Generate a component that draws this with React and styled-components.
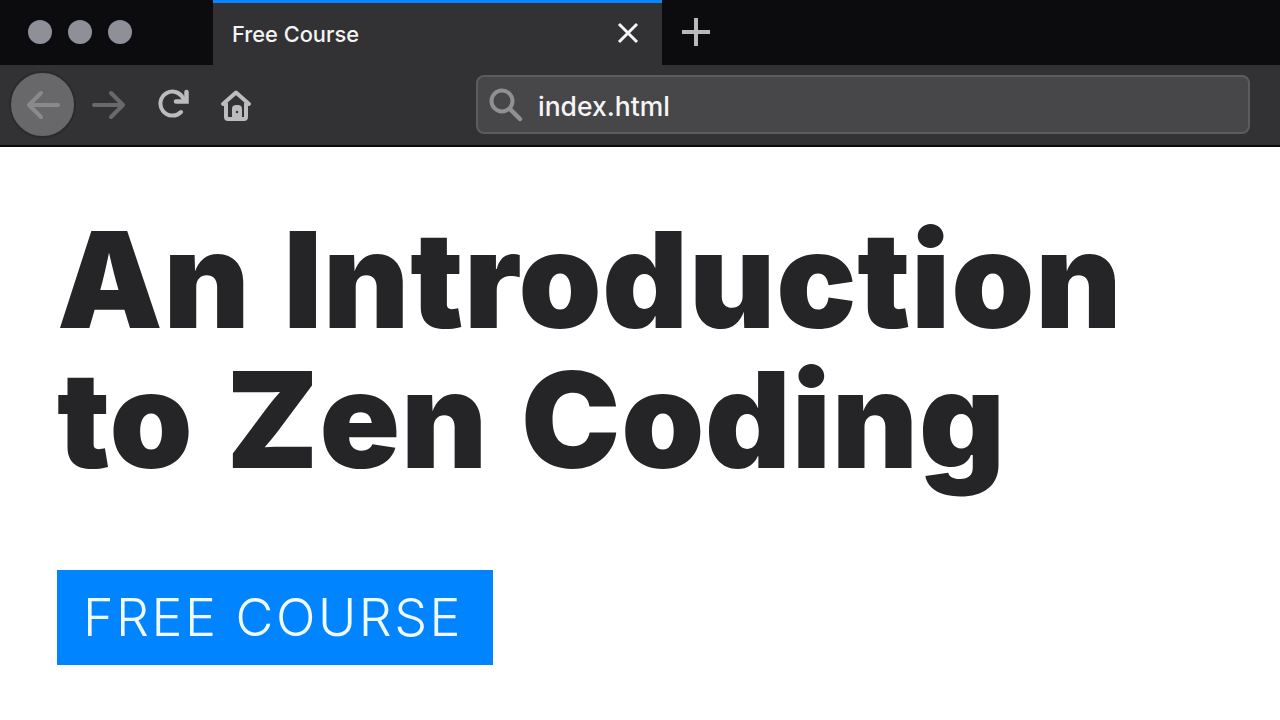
import React from "react";
import styled, { createGlobalStyle } from "styled-components";

const Global = createGlobalStyle`
  html, body { margin: 0; padding: 0; background: #fff; }
  body { width: 1280px; height: 720px; overflow: hidden; font-family: "Inter", "Liberation Sans", sans-serif; }
`;
const Page = styled.div`width:1280px;height:720px;display:flex;flex-direction:column;background:#fff;`;
const TabBar = styled.div`height:65px;background:#0c0c0f;display:flex;align-items:stretch;flex:none;`;
const Lights = styled.div`width:213px;box-sizing:border-box;padding:0 0 2px 28px;display:flex;align-items:center;gap:16px;`;
const Light = styled.span`width:24px;height:24px;border-radius:50%;background:#8f8f9a;`;
const Tab = styled.div`width:449px;box-sizing:border-box;background:#323234;border-top:3px solid #0a84ff;padding:0 22px 2px 19px;display:flex;align-items:center;justify-content:space-between;`;
const TabTitle = styled.span`color:#f4f4f5;font:500 21.800px "Inter",sans-serif;padding-top:2px;`;
const NewTab = styled.div`width:68px;display:flex;align-items:center;justify-content:center;padding-bottom:2px;`;
const Toolbar = styled.div`height:82px;flex:none;box-sizing:border-box;padding-bottom:1px;background:#323234;border-bottom:2px solid #0c0c0f;display:grid;grid-template-columns:476px 774px;align-items:center;`;
const Nav = styled.div`display:flex;align-items:center;padding-left:9px;`;
const Round = styled.div`width:67px;height:67px;box-sizing:border-box;border-radius:50%;background:#68686a;border:2px solid #2b2b2d;display:flex;align-items:center;justify-content:center;`;
const NavIcon = styled.div`display:flex;margin-left:${p=>p.$gap}px;`;
const Url = styled.div`height:59px;box-sizing:border-box;background:#474749;border:2px solid #5c5c5e;border-radius:8px;display:flex;align-items:center;padding-left:10px;gap:15px;`;
const UrlText = styled.span`color:#f5f5f6;font:500 26.500px "Inter",sans-serif;padding-top:2px;`;
const Main = styled.main`padding:63px 0 0 57px;`;
const Title = styled.h1`margin:0;color:#252527;font:860 133px/140px "Inter",sans-serif;white-space:nowrap;font-variant-ligatures:none;letter-spacing:0.800px;word-spacing:5.500px;`;
const Cta = styled.div`margin-top:80px;width:436px;height:95px;box-sizing:border-box;padding-right:4px;background:#0084ff;color:#f0f9ff;font:350 52px "Inter",sans-serif;letter-spacing:2.500px;display:flex;align-items:center;justify-content:center;`;

export default function App(){return <Page><Global/>
<TabBar><Lights><Light/><Light/><Light/></Lights>
<Tab><TabTitle>Free Course</TabTitle><svg width="24" height="24" viewBox="0 0 24 24"><path d="M3 3 21 21M21 3 3 21" stroke="#f5f5f5" strokeWidth="3"/></svg></Tab>
<NewTab><svg width="28" height="28" viewBox="0 0 28 28"><path d="M14 0V28M0 14H28" stroke="#b9b9bb" strokeWidth="4"/></svg></NewTab></TabBar>
<Toolbar><Nav><Round><svg width="34" height="30" viewBox="0 0 34 30" fill="none"><path d="M15 3 3 15l12 12M3 15h29" stroke="#8a8a8c" strokeWidth="4" strokeLinecap="round" strokeLinejoin="round"/></svg></Round>
<NavIcon $gap={16}><svg width="34" height="30" viewBox="0 0 34 30" fill="none"><path d="M19 3l12 12-12 12M31 15H2" stroke="#69696b" strokeWidth="4" strokeLinecap="round" strokeLinejoin="round"/></svg></NavIcon>
<NavIcon $gap={31}><svg width="32" height="32" viewBox="0 0 32 32" fill="none"><path d="M24 23A12 12 0 1 1 26.500 10" stroke="#bcbcbe" strokeWidth="4" strokeLinecap="round"/><path d="M29.500 3V12.500H19" stroke="#bcbcbe" strokeWidth="4.500" strokeLinecap="round"/></svg></NavIcon>
<NavIcon $gap={30}><svg width="34" height="34" viewBox="0 0 34 34" fill="none"><path d="M4 16 17 4.500 30 16" stroke="#bcbcbe" strokeWidth="4" strokeLinecap="round" strokeLinejoin="round"/><path d="M7 15V29Q7 31 9 31H25Q27 31 27 29V15" stroke="#bcbcbe" strokeWidth="4"/><rect x="13" y="17" width="10" height="15" rx="4" fill="#bcbcbe"/><circle cx="18" cy="24" r="1.200" fill="#323234"/></svg></NavIcon></Nav>
<Url><svg width="35" height="35" viewBox="0 0 35 35" fill="none"><circle cx="14" cy="14" r="10.500" stroke="#909092" strokeWidth="4"/><path d="M22 22 32 32" stroke="#909092" strokeWidth="4.500" strokeLinecap="round"/></svg><UrlText>index.html</UrlText></Url></Toolbar>
<Main><Title>An Introduction<br/>to Zen Coding</Title><Cta>FREE COURSE</Cta></Main>
</Page>}
